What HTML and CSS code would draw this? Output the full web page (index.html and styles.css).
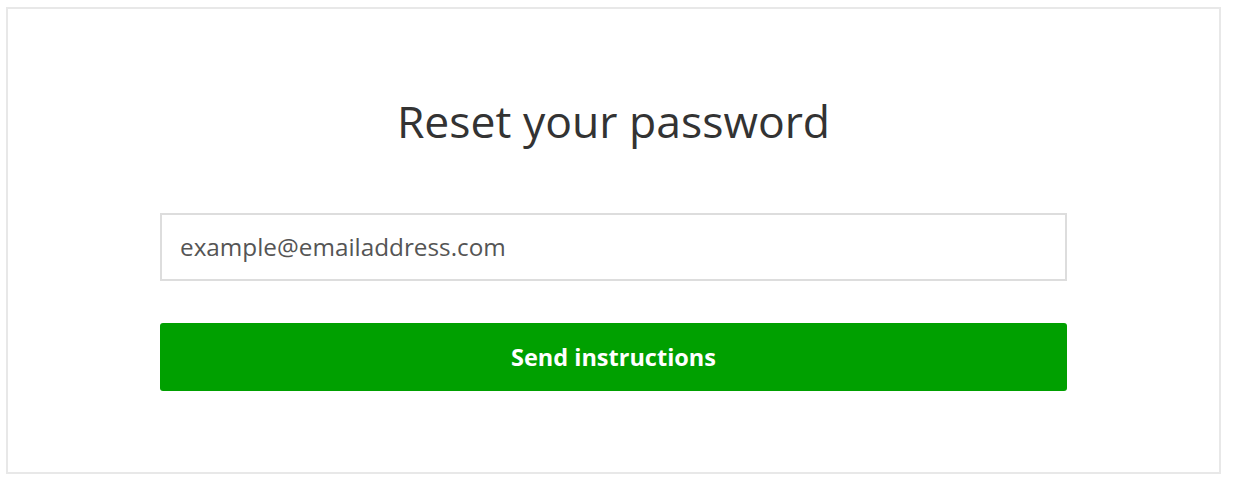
FILE: index.html
```html
<!DOCTYPE html>
<html>
<head>
<meta charset="utf-8">
<link rel="stylesheet" href="styles.css">
</head>
<body>
<div class="card">
  <h1 class="title">Reset your password</h1>
  <form class="form">
    <input class="email" type="email" placeholder="example@emailaddress.com">
    <button class="submit" type="button">Send instructions</button>
  </form>
</div>
</body>
</html>
```
FILE: styles.css
```css
html, body {
  margin: 0;
  padding: 0;
  background: #ffffff;
}
body {
  font-family: "Open Sans", "Noto Sans", sans-serif;
  padding: 7px 12px 13px 6px;
}
.card {
  border: 2px solid #e8e8e8;
  padding: 84px 0 81px;
  box-sizing: border-box;
  height: 467px;
}
.title {
  margin: 0 0 64px;
  text-align: center;
  font-weight: 400;
  font-size: 44.5px;
  line-height: 56px;
  color: #333333;
}
.form {
  width: 907px;
  margin: 0 auto;
  display: flex;
  flex-direction: column;
  gap: 42px;
}
.email {
  height: 68px;
  box-sizing: border-box;
  border: 2px solid #dddddd;
  padding: 0 18px 2px;
  font-family: "Open Sans", sans-serif;
  font-size: 24.3px;
  color: #333;
  outline: none;
  margin: 0;
}
.email::placeholder {
  color: #555555;
  opacity: 1;
}
.submit {
  height: 68px;
  border: none;
  border-radius: 3px;
  background: #00a000;
  color: #ffffff;
  font-family: "Open Sans", sans-serif;
  font-weight: 700;
  font-size: 23.5px;
  margin: 0;
  cursor: pointer;
}
```
